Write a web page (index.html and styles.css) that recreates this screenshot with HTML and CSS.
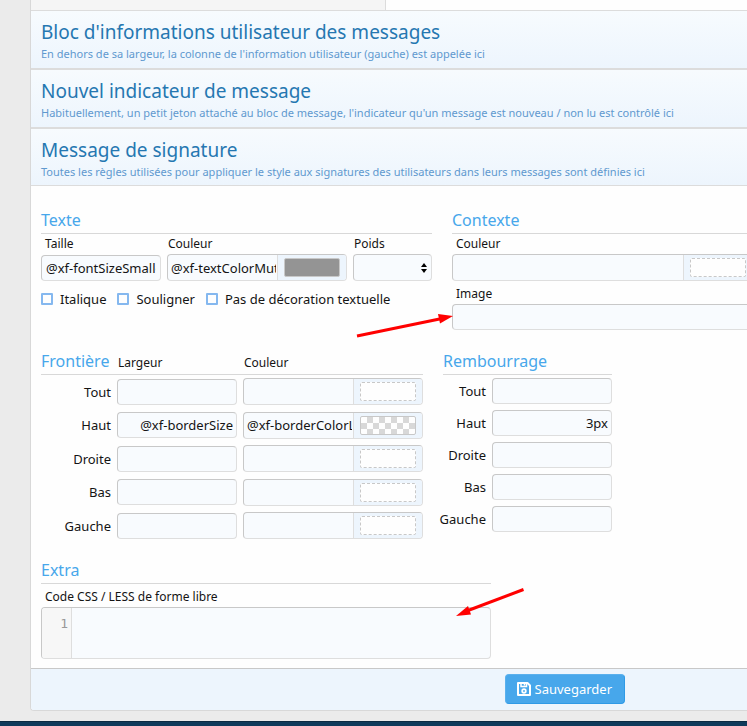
FILE: index.html
```html
<!DOCTYPE html>
<html lang="fr">
<head>
<meta charset="utf-8">
<title>Message de signature</title>
<link rel="stylesheet" href="styles.css">
</head>
<body>
<main class="panel">
  <div class="previous"></div>
  <header class="block"><h2>Bloc d'informations utilisateur des messages</h2><p>En dehors de sa largeur, la colonne de l'information utilisateur (gauche) est appelée ici</p></header>
  <header class="block"><h2>Nouvel indicateur de message</h2><p>Habituellement, un petit jeton attaché au bloc de message, l'indicateur qu'un message est nouveau / non lu est contrôlé ici</p></header>
  <header class="block block-open"><h2>Message de signature</h2><p>Toutes les règles utilisées pour appliquer le style aux signatures des utilisateurs dans leurs messages sont définies ici</p></header>
  <form class="body">
    <div class="row row-top">
      <section class="text">
        <h3>Texte</h3>
        <div class="text-fields">
          <label for="size">Taille</label><label for="color">Couleur</label><label for="weight">Poids</label>
          <input class="field" id="size" value="@xf-fontSizeSmaller">
          <div class="color"><input id="color" value="@xf-textColorMuted"><span class="picker"><button type="button" class="swatch swatch-gray" aria-label="Choisir"></button></span></div>
          <div class="select"><select id="weight"><option></option></select><svg viewBox="0 0 6 10" width="6" height="10"><path d="M3 0 6 4H0ZM0 6H6L3 10Z"/></svg></div>
        </div>
        <div class="checks">
          <label><input type="checkbox">Italique</label>
          <label><input type="checkbox">Souligner</label>
          <label><input type="checkbox">Pas de décoration textuelle</label>
        </div>
      </section>
      <section class="background">
        <h3>Contexte</h3>
        <label for="bg-color">Couleur</label>
        <div class="color"><input id="bg-color"><span class="picker"><button type="button" class="swatch" aria-label="Choisir"></button></span></div>
        <label class="image-label" for="bg-image">Image</label>
        <input class="field" id="bg-image">
      </section>
    </div>
    <div class="row row-box">
      <section class="border">
        <div class="border-head"><h3>Frontière</h3><span>Largeur</span><span>Couleur</span></div>
        <div class="border-grid">
          <label for="b1">Tout</label><input class="field num" id="b1"><div class="color"><input aria-label="Couleur"><span class="picker"><button type="button" class="swatch" aria-label="Choisir"></button></span></div>
          <label for="b2">Haut</label><input class="field num" id="b2" value="@xf-borderSize"><div class="color"><input aria-label="Couleur" value="@xf-borderColorLight"><span class="picker"><button type="button" class="swatch swatch-checker" aria-label="Choisir"></button></span></div>
          <label for="b3">Droite</label><input class="field num" id="b3"><div class="color"><input aria-label="Couleur"><span class="picker"><button type="button" class="swatch" aria-label="Choisir"></button></span></div>
          <label for="b4">Bas</label><input class="field num" id="b4"><div class="color"><input aria-label="Couleur"><span class="picker"><button type="button" class="swatch" aria-label="Choisir"></button></span></div>
          <label for="b5">Gauche</label><input class="field num" id="b5"><div class="color"><input aria-label="Couleur"><span class="picker"><button type="button" class="swatch" aria-label="Choisir"></button></span></div>
        </div>
      </section>
      <section class="padding">
        <h3>Rembourrage</h3>
        <div class="padding-grid">
          <label for="p1">Tout</label><input class="field num" id="p1">
          <label for="p2">Haut</label><input class="field num" id="p2" value="3px">
          <label for="p3">Droite</label><input class="field num" id="p3">
          <label for="p4">Bas</label><input class="field num" id="p4">
          <label for="p5">Gauche</label><input class="field num" id="p5">
        </div>
      </section>
    </div>
    <section class="extra">
      <h3>Extra</h3>
      <label for="code">Code CSS / LESS de forme libre</label>
      <div class="editor"><span class="gutter">1</span><textarea id="code"></textarea></div>
    </section>
    <footer class="submit">
      <button type="button" class="save"><svg viewBox="0 0 14 14" width="14" height="14" fill="none" stroke="#fff"><path d="M1 1H10.5L13 3.5V13H1Z" stroke-width="2" stroke-linejoin="round"/><path d="M4 1V4.5H9.5V1" stroke-width="1.5"/><path d="M7.5 1.500V3.500" stroke-width="1.5"/><circle cx="7" cy="9" r="1.800" stroke-width="1.8"/></svg>Sauvegarder</button>
    </footer>
  </form>
</main>
<div class="site-footer"></div>
<svg class="arrows" width="747" height="726" viewBox="0 0 747 726" aria-hidden="true"><g stroke="#f00" stroke-width="3" fill="none"><path d="M357 336 442 318.500"/><path d="M523.500 589.500 468 610.500"/></g><g fill="#f00"><path d="M453 316 438 314 440 323.500Z"/><path d="M456 616 468 606 471 614.500Z"/></g></svg>
</body>
</html>
```
FILE: styles.css
```css
* { box-sizing: border-box; }
body {
  position: relative;
  margin: 0;
  overflow: hidden;
  background: #ebebeb;
  color: #141414;
  font: 13px/18px "Noto Sans", "Open Sans", sans-serif;
}
h2, h3, p { margin: 0; font-weight: 400; }
input, select, textarea, button { font: inherit; color: inherit; margin: 0; }

.panel {
  margin-left: 30px;
  border: 1px solid #d8d8d8;
  border-width: 0 0 1px 1px;
  border-radius: 0 0 0 4px;
  background: #fefefe;
  overflow: hidden;
}
.previous {
  width: 355px;
  height: 10px;
  background: #f5f5f5;
  border-right: 1px solid #dcdcdc;
}
.block {
  padding: 8px 10px 6px;
  border-bottom: 2px solid #dcdcdc;
  background: linear-gradient(#f7fbfe, #edf5fd);
  white-space: nowrap;
}
.previous + .block { border-top: 1px solid #dcdcdc; }
.block-open { padding-bottom: 5px; border-bottom-width: 1px; }
.block h2 { color: #2577b1; font-size: 19px; line-height: 26px; }
.block p { color: #6099cf; font-size: 11px; line-height: 17px; }

.row { display: grid; padding: 0 0 0 10px; }
.row-top { grid-template-columns: 391px minmax(300px, 1fr); gap: 20px; padding-top: 22px; }
.row-box { grid-template-columns: 382px 169px; gap: 20px; padding-top: 19px; }
h3 { color: #47a7eb; font-size: 16px; line-height: 25px; }
.text h3, .background h3, .padding h3, .extra h3, .border-head { border-bottom: 1px solid #d8d8d8; }
.text label, .background label, .extra label, .border-head span { font-size: 12px; }
.background > label, .extra > label { display: block; padding-left: 4px; }
.text-fields {
  display: grid;
  grid-template-columns: 120px 180px 1fr;
  grid-template-rows: 20px 27px;
  column-gap: 6px;
  align-items: center;
}
.text-fields label:first-child { padding-left: 4px; }
.text-fields label { padding-left: 1px; }
.background > label { height: 20px; line-height: 20px; }
.background .image-label { margin-top: 3px; }

.field, .color, .select select, .editor {
  border: 1px solid;
  border-color: #c8c8c8 #dedede #dedede #c8c8c8;
  border-radius: 4px;
  background: #f8fbfe;
}
.field { width: 100%; height: 26px; padding: 0 4px; outline: 0; }
.num { text-align: right; padding-right: 3px; }
.color { display: flex; height: 27px; overflow: hidden; }
.background .color { width: 301px; }
.color input { flex: 1; min-width: 0; border: 0; padding: 0; margin: 0 1px 0 3px; background: transparent; }
.picker {
  display: flex;
  width: 69px;
  padding: 3px 6px;
  border-left: 1px solid #dedede;
  background: #edf5fd;
}
.swatch { flex: 1; padding: 0; border: 1px dashed #c8c8c8; border-radius: 2px; background: #fefefe; }
.swatch-gray { border: 1px solid #c8c8c8; background: #949494; }
.swatch-checker {
  border-style: solid;
  background: repeating-conic-gradient(#d8d8d8 0 25%, #fefefe 0 50%) 0 0 / 12px 12px;
}
.select { position: relative; }
.select select { display: block; width: 100%; height: 27px; appearance: none; }
.select svg { position: absolute; right: 5px; top: 9px; }

.checks { display: flex; gap: 11px; padding-top: 9px; }
.checks label { display: flex; align-items: center; gap: 7px; font-size: 13px; }
.checks input {
  width: 12px;
  height: 12px;
  appearance: none;
  border: 2px solid #85b8ef;
  border-radius: 1px;
  background: #fefefe;
}
.border-head, .border-grid {
  display: grid;
  grid-template-columns: 70px 120px 180px;
  column-gap: 6px;
}
.border-head { align-items: center; }
.border-head span { padding: 3px 0 0 1px; }
.border-grid {
  grid-auto-rows: 27px;
  align-content: space-between;
  align-items: center;
  min-height: 161px;
  margin-top: 3px;
}
.padding-grid {
  display: grid;
  grid-template-columns: 43px 120px;
  gap: 6px;
  align-items: center;
  margin-top: 3px;
}
.border-grid label, .padding-grid label { justify-self: end; }

.extra { width: 450px; margin: 19px 0 0 10px; }
.extra > label { padding-top: 4px; }
.editor { display: flex; height: 52px; margin-top: 1px; overflow: hidden; }
.gutter {
  width: 30px;
  padding: 7px 3px 0 0;
  border-right: 1px solid #dedede;
  background: #f7f7f7;
  color: #999;
  font-family: "DejaVu Sans Mono", monospace;
  text-align: right;
}
.editor textarea { flex: 1; border: 0; outline: 0; resize: none; background: transparent; }

.submit {
  margin-top: 9px;
  padding: 5px 0 6px 66%;
  border-top: 1px solid #c8c8c8;
  background: #edf5fd;
}
.save {
  display: flex;
  align-items: center;
  gap: 4px;
  height: 30px;
  margin-left: 1px;
  padding: 0 12px 0 11px;
  border: 1px solid;
  border-color: #5ab0ed #2f9ae6 #2f9ae6 #5ab0ed;
  border-radius: 4px;
  background: #47a7eb;
  color: #fff;
}
.site-footer { height: 16px; margin-top: 10px; border-top: 1px solid #0b2a42; background: #0f3a5b; }
.arrows { position: absolute; left: 0; top: 0; pointer-events: none; }
```
